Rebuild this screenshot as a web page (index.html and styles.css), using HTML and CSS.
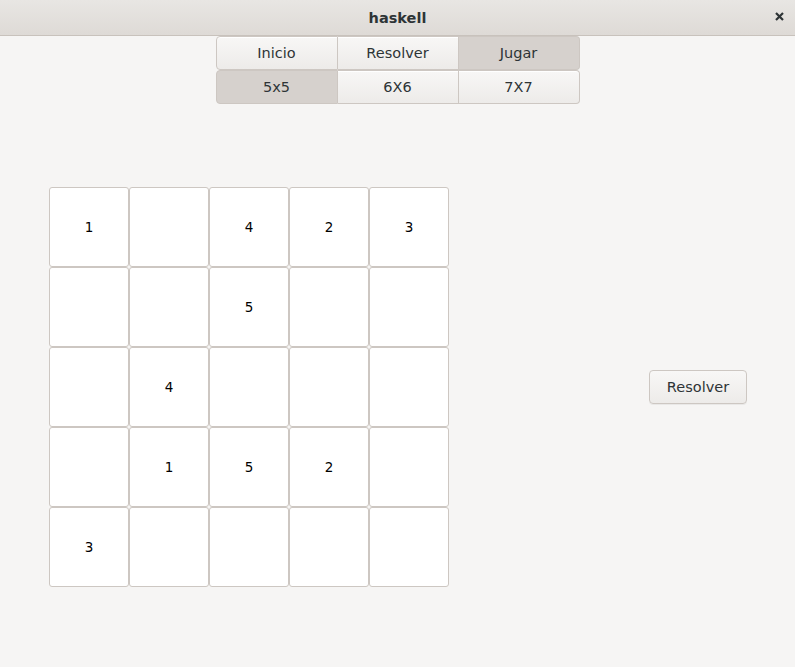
FILE: index.html
```html
<!DOCTYPE html>
<html>
<head>
<meta charset="utf-8">
<link rel="stylesheet" href="styles.css">
</head>
<body>
<div class="titlebar">
  <span class="title">haskell</span>
  <svg class="close" width="9" height="9" viewBox="0 0 9 9"><path d="M1 1 L8 8 M8 1 L1 8" stroke="#2e3436" stroke-width="2.2" fill="none"/></svg>
</div>
<div class="tabs">
  <div class="row">
    <div class="btn">Inicio</div>
    <div class="btn">Resolver</div>
    <div class="btn active">Jugar</div>
  </div>
  <div class="row">
    <div class="btn active">5x5</div>
    <div class="btn">6X6</div>
    <div class="btn">7X7</div>
  </div>
</div>
<div class="content">
  <div class="grid">
    <div class="cell">1</div><div class="cell"></div><div class="cell">4</div><div class="cell">2</div><div class="cell">3</div>
    <div class="cell"></div><div class="cell"></div><div class="cell">5</div><div class="cell"></div><div class="cell"></div>
    <div class="cell"></div><div class="cell">4</div><div class="cell"></div><div class="cell"></div><div class="cell"></div>
    <div class="cell"></div><div class="cell">1</div><div class="cell">5</div><div class="cell">2</div><div class="cell"></div>
    <div class="cell">3</div><div class="cell"></div><div class="cell"></div><div class="cell"></div><div class="cell"></div>
  </div>
  <div class="solve">Resolver</div>
</div>
</body>
</html>
```
FILE: styles.css
```css
html, body {
  margin: 0;
  padding: 0;
}
body {
  width: 795px;
  height: 667px;
  background: #f6f5f4;
  font-family: "DejaVu Sans", sans-serif;
  font-size: 14.5px;
  color: #2e3436;
  overflow: hidden;
}
.titlebar {
  position: relative;
  height: 35px;
  border-bottom: 1px solid #c8c2bc;
  background: linear-gradient(#e8e6e3, #dedad6);
  display: flex;
  align-items: center;
  justify-content: center;
}
.title {
  font-weight: bold;
  font-size: 14.5px;
  color: #2e3436;
}
.close {
  position: absolute;
  left: 775px;
  top: 12px;
}
.tabs {
  width: 364px;
  margin: 0 auto;
  display: flex;
  flex-direction: column;
}
.row {
  display: flex;
}
.btn {
  flex: 1;
  height: 32px;
  display: flex;
  align-items: center;
  justify-content: center;
  border: 1px solid #cdc7c2;
  border-left: none;
  background: linear-gradient(#f8f7f6, #edebe9);
  box-shadow: inset 0 1px #ffffff;
}
.btn:first-child {
  border-left: 1px solid #cdc7c2;
  border-radius: 4px 0 0 4px;
}
.btn:last-child {
  border-radius: 0 4px 4px 0;
}
.btn.active {
  background: #d6d1cd;
  box-shadow: none;
}
.content {
  display: flex;
  align-items: center;
  padding-left: 49px;
  margin-top: 83px;
}
.grid {
  display: grid;
  grid-template-columns: repeat(5, 80px);
  grid-auto-rows: 80px;
}
.cell {
  box-sizing: border-box;
  border: 1px solid #cdc7c2;
  border-radius: 3px;
  background: #ffffff;
  display: flex;
  align-items: center;
  justify-content: center;
  color: #000000;
  font-size: 13.5px;
}
.solve {
  margin-left: 200px;
  width: 96px;
  height: 32px;
  border: 1px solid #cdc7c2;
  border-radius: 4px;
  background: linear-gradient(#f8f7f6, #edebe9);
  box-shadow: 0 1px rgba(0,0,0,0.05);
  display: flex;
  align-items: center;
  justify-content: center;
}
```
